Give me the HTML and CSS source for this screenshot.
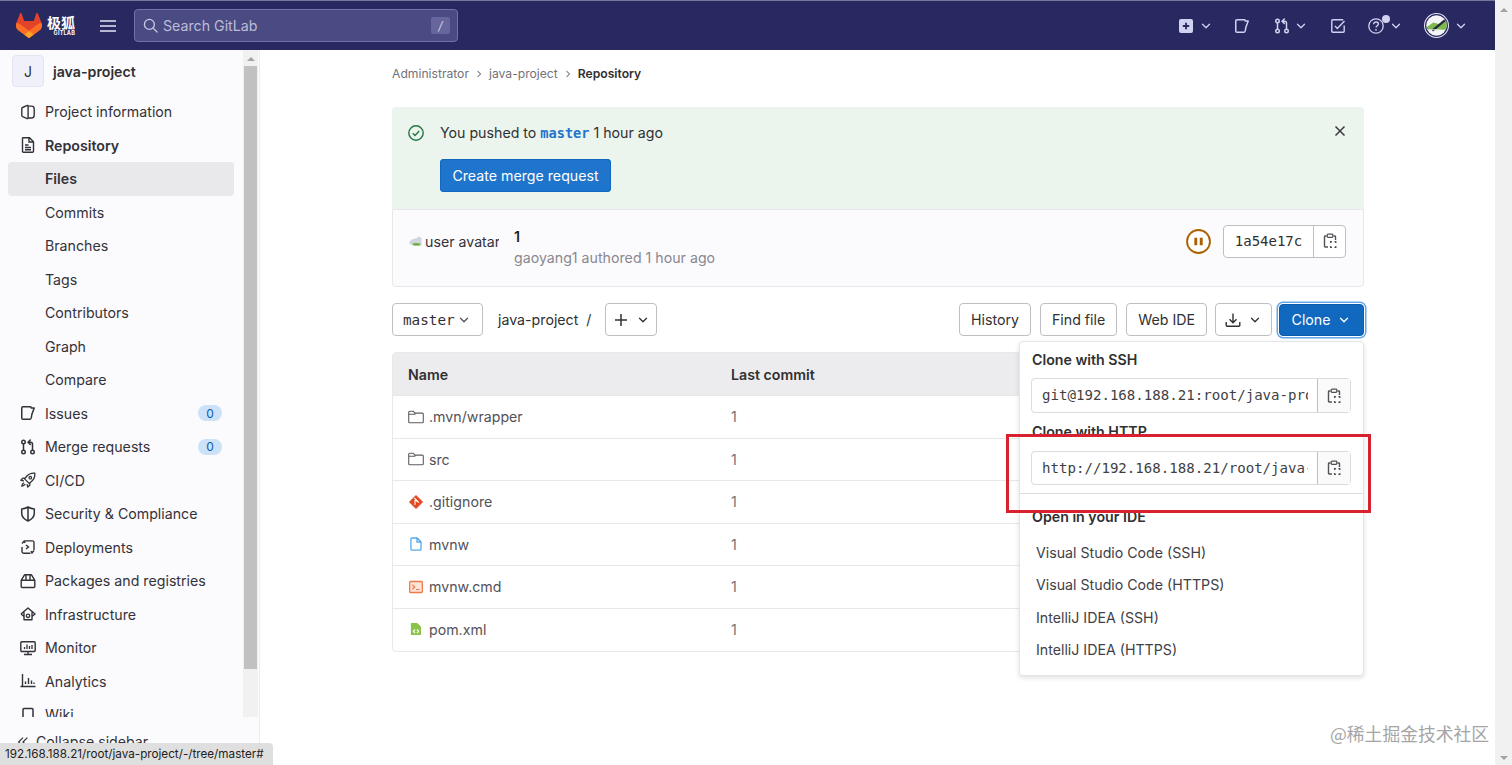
FILE: index.html
```html
<!DOCTYPE html>
<html lang="en">
<head>
<meta charset="utf-8">
<title>java-project</title>
<link rel="stylesheet" href="styles.css">
</head>
<body>
<svg class="sprite" width="0" height="0">
  <symbol id="chev" viewBox="0 0 16 16"><path d="M4 6l4 4 4-4" fill="none" stroke="currentColor" stroke-width="1.5" stroke-linecap="round" stroke-linejoin="round"/></symbol>
  <symbol id="clip" viewBox="0 0 16 16"><path d="M4.5 3H3.2C2.8 3 2.5 3.3 2.5 3.7v9.6c0 .4.3.7.7.7H6M11.5 3h1.3c.4 0 .7.3.7.7V7" fill="none" stroke="currentColor" stroke-width="1.4"/><rect x="5.2" y="1.2" width="5.6" height="3.2" rx=".8" fill="none" stroke="currentColor" stroke-width="1.3"/><path d="M8.6 10V8.7h1.4M12.4 8.7h1.4V10M13.8 13v1.4h-1.4M10 14.4H8.6V13" fill="none" stroke="currentColor" stroke-width="1.3"/></symbol>
  <symbol id="folder" viewBox="0 0 16 16"><path d="M.7 3.2c0-.6.4-1 1-1h3.7l1.5 1.9h7.4c.6 0 1 .4 1 1v7.7c0 .6-.4 1-1 1H1.7c-.6 0-1-.4-1-1V3.2zM.7 5.3h6.2l.6-1.2" fill="none" stroke="currentColor" stroke-width="1.1"/></symbol>
  <symbol id="issues" viewBox="0 0 16 16"><path d="M3 1.75h7.2c.5 0 .9.3 1 .8l.1.4 2.9 0-2.300 6.200-.6 3.600c-.1.700-.6 1.500-1.300 1.500H3c-.7 0-1.250-.55-1.250-1.250V3C1.750 2.300 2.300 1.750 3 1.750z" fill="none" stroke="currentColor" stroke-width="1.5" stroke-linejoin="round"/></symbol>
  <symbol id="mr" viewBox="0 0 16 16"><g fill="none" stroke="currentColor" stroke-width="1.5"><circle cx="3.5" cy="3" r="1.75"/><circle cx="3.5" cy="13" r="1.75"/><circle cx="12.5" cy="13" r="1.75"/><path d="M3.5 5v6M12.5 11V5c0-1-.7-1.800-1.800-1.800H8.500M10.300 1L8 3.200l2.300 2.200" stroke-linecap="round" stroke-linejoin="round"/></g></symbol>
  <clipPath id="av-clip"><circle cx="12" cy="12" r="9.800"/></clipPath>
</svg>

<div class="app">
  <div class="window">
    <header class="navbar">
      <div class="brand">
        <svg class="tanuki" viewBox="0 0 25 24"><path d="M24.507 9.5l-.034-.09L21.082.562a.896.896 0 00-1.694.091l-2.29 7.01H7.825L5.535.653a.898.898 0 00-1.694-.09L.451 9.411.416 9.5a6.297 6.297 0 002.09 7.278l.012.01.03.022 5.16 3.867 2.56 1.935 1.554 1.176a1.051 1.051 0 001.268 0l1.555-1.176 2.56-1.935 5.197-3.89.014-.01A6.297 6.297 0 0024.507 9.5z" fill="#E24329"/><path d="M24.507 9.5l-.034-.09a11.44 11.44 0 00-4.56 2.051l-7.447 5.632 4.742 3.584 5.197-3.89.014-.01A6.297 6.297 0 0024.507 9.5z" fill="#FC6D26"/><path d="M7.707 20.677l2.56 1.935 1.555 1.176a1.051 1.051 0 001.268 0l1.555-1.176 2.56-1.935-4.743-3.584-4.755 3.584z" fill="#FCA326"/><path d="M5.01 11.461a11.43 11.43 0 00-4.56-2.05L.416 9.5a6.297 6.297 0 002.09 7.278l.012.01.03.022 5.16 3.867 4.745-3.584-7.444-5.632z" fill="#FC6D26"/></svg>
        <div class="brand-text"><span class="brand-cn">极狐</span><span class="brand-en">GITLAB</span></div>
      </div>
      <svg class="burger" viewBox="0 0 16 16"><path d="M0 3h16M0 8h16M0 13h16" stroke="currentColor" stroke-width="1.3"/></svg>
      <div class="search">
        <svg class="search-ic" viewBox="0 0 16 16"><circle cx="6.8" cy="6.8" r="5.3" fill="none" stroke="currentColor" stroke-width="1.4"/><path d="M10.8 10.8L15 15" stroke="currentColor" stroke-width="1.4" stroke-linecap="round"/></svg>
        <span class="search-text">Search GitLab</span>
        <kbd class="slash">/</kbd>
      </div>
      <nav class="nav-right">
        <span class="nav-item"><svg class="ic14" viewBox="0 0 14 14"><rect width="14" height="14" rx="2" fill="currentColor"/><path d="M7 3.8v6.4M3.8 7h6.4" stroke="#292961" stroke-width="1.8"/></svg><svg class="chev-12" ><use href="#chev"/></svg></span>
        <span class="nav-item nav-issues"><svg class="ic16"><use href="#issues"/></svg></span>
        <span class="nav-item nav-mr"><svg class="ic16"><use href="#mr"/></svg><svg class="chev-12"><use href="#chev"/></svg></span>
        <span class="nav-item nav-todo"><svg class="ic16" viewBox="0 0 16 16"><path d="M14.2 7.5v5.7c0 .6-.5 1-1 1H2.800c-.6 0-1-.4-1-1V2.800c0-.6.4-1 1-1h10.400" fill="none" stroke="currentColor" stroke-width="1.4"/><path d="M5 8l2.300 2.400L14.500 3" fill="none" stroke="currentColor" stroke-width="1.4"/></svg></span>
        <span class="nav-item nav-help"><svg class="ic16" viewBox="0 0 16 16"><circle cx="8" cy="8" r="7.2" fill="none" stroke="currentColor" stroke-width="1.3"/><path d="M5.700 6.200c0-1.400 1-2.200 2.400-2.200s2.300.9 2.300 2c0 1.800-2.400 1.700-2.400 3.600" fill="none" stroke="currentColor" stroke-width="1.4"/><circle cx="8" cy="11.800" r=".9" fill="currentColor"/></svg><i class="help-dot"></i><svg class="chev-12"><use href="#chev"/></svg></span>
        <span class="nav-item nav-user"><svg class="nav-avatar" viewBox="0 0 24 24"><circle cx="12" cy="12" r="11.500" fill="#292961" stroke="#e6e6f2"/><g clip-path="url(#av-clip)"><rect width="24" height="24" fill="#f4f5f6"/><path d="M2 14l7-5 7 2 6-4v9H2z" fill="#7cbb4a"/><path d="M8 17L20 7" stroke="#26263c" stroke-width="2.200"/><path d="M2 16h14" stroke="#d8dde0" stroke-width="1"/></g></svg><svg class="chev-12"><use href="#chev"/></svg></span>
      </nav>
    </header>

    <div class="layout">
      <aside class="sidebar">
        <div class="side-scroll">
          <div class="side-main">
            <div class="context"><span class="ctx-avatar">J</span><span class="ctx-name">java-project</span></div>
            <ul class="side-list">
              <li class="side-item"><svg class="ic16" viewBox="0 0 16 16"><path d="M7.200 1.400L2.600 3.500c-.5.200-.8.600-.8 1.100v7c0 .5.300.9.800 1.100l4.600 1.900c.4.200.9-.1.900-.6V2c0-.5-.5-.8-.9-.6zM8.100 2.100h3.400c1.500 0 2.700 1.200 2.700 2.700v6.500c0 1.500-1.200 2.700-2.700 2.700H8.100" fill="none" stroke="currentColor" stroke-width="1.4" stroke-linejoin="round"/></svg>Project information</li>
              <li class="side-item is-open"><svg class="ic16" viewBox="0 0 16 16"><path d="M3 .8h6.500L13.500 4.800v9.400c0 .6-.4 1-1 1H3.500c-.6 0-1-.4-1-1V1.300C2.500 1 2.700.8 3 .8zM9 1v4h4.300M5 8h3.500M5 10.500h6M5 12.800h6" fill="none" stroke="currentColor" stroke-width="1.400"/></svg>Repository</li>
              <li class="side-item is-active sub">Files</li>
              <li class="side-item sub">Commits</li>
              <li class="side-item sub">Branches</li>
              <li class="side-item sub">Tags</li>
              <li class="side-item sub">Contributors</li>
              <li class="side-item sub">Graph</li>
              <li class="side-item sub">Compare</li>
              <li class="side-item"><svg class="ic16"><use href="#issues"/></svg>Issues<span class="badge">0</span></li>
              <li class="side-item"><svg class="ic16"><use href="#mr"/></svg>Merge requests<span class="badge">0</span></li>
              <li class="side-item"><svg class="ic16" viewBox="0 0 16 16"><path d="M14.800 1.200c-3.500-.3-6.300.9-8.300 3.300L4.600 6.900l4.500 4.500 2.400-1.900c2.400-2 3.600-4.800 3.300-8.300zM5.200 6.200H2.800L.9 8.300l3 .6M9.800 10.800v2.400l-2.100 1.900-.6-3M4 10.800C2.800 11.500 2 12.700 1.800 14.200c1.500-.2 2.700-1 3.400-2.200" fill="none" stroke="currentColor" stroke-width="1.300" stroke-linejoin="round"/><circle cx="10.300" cy="5.700" r="1.300" fill="none" stroke="currentColor" stroke-width="1.200"/></svg>CI/CD</li>
              <li class="side-item"><svg class="ic16" viewBox="0 0 16 16"><path d="M8 1C5.800 2.300 3.800 2.800 1.700 2.900v4.400c0 3.300 2.400 6.100 6.300 7.700 3.900-1.600 6.300-4.400 6.300-7.700V2.900C12.200 2.800 10.200 2.300 8 1zM8 1.500v13" fill="none" stroke="currentColor" stroke-width="1.500" stroke-linejoin="round"/></svg>Security &amp; Compliance</li>
              <li class="side-item"><svg class="ic16" viewBox="0 0 16 16"><path d="M2 8v4.500c0 1 .7 1.700 1.700 1.700h6.800M5 1.900h7.300c1 0 1.700.7 1.700 1.700V11M2 4.500L4.200 2 5 4M14 11.500L12 14l-1-2" fill="none" stroke="currentColor" stroke-width="1.400"/><path d="M6 6l2.500 2L6 10" fill="none" stroke="currentColor" stroke-width="1.400"/></svg>Deployments</li>
              <li class="side-item"><svg class="ic16" viewBox="0 0 16 16"><path d="M1.200 7.300h13.600v6.200c0 .6-.4 1-1 1H2.200c-.6 0-1-.4-1-1V7.300zM1.200 7.300L4.500 1.800h7L14.800 7.300M6 7V1.800M10 7V1.800" fill="none" stroke="currentColor" stroke-width="1.400" stroke-linejoin="round"/></svg>Packages and registries</li>
              <li class="side-item"><svg class="ic16" viewBox="0 0 16 16"><path d="M1 8l7-6 7 6-2.800 2.300M3.800 10.300L1 8M4 6.300v7.500h8V6.300" fill="none" stroke="currentColor" stroke-width="1.400" stroke-linejoin="round"/><circle cx="8" cy="9.800" r="1.700" fill="none" stroke="currentColor" stroke-width="1.300"/></svg>Infrastructure</li>
              <li class="side-item"><svg class="ic16" viewBox="0 0 16 16"><rect x=".8" y="1.800" width="14.400" height="9.700" rx="1" fill="none" stroke="currentColor" stroke-width="1.400"/><path d="M8 11.500v3M4 14.500h8M4.500 9V7M7 9V4.500M9.500 9V6M12 9V5" stroke="currentColor" stroke-width="1.300" fill="none"/></svg>Monitor</li>
              <li class="side-item"><svg class="ic16" viewBox="0 0 16 16"><path d="M2.500 1v12.500M.5 13.500H15.500M5.500 11V8.500M8.500 11V5M11.500 11V7.500M14 11V9.500" stroke="currentColor" stroke-width="1.400" fill="none"/></svg>Analytics</li>
              <li class="side-item"><svg class="ic16" viewBox="0 0 16 16"><path d="M3 15V2.500c0-.6.400-1 1-1h8c.6 0 1 .4 1 1V15" fill="none" stroke="currentColor" stroke-width="1.500"/></svg>Wiki</li>
            </ul>
          </div>
          <div class="side-track"><i class="arrow-up"></i><div class="side-thumb"></div></div>
        </div>
        <div class="side-foot"><svg class="collapse" viewBox="0 0 16 16"><path d="M8 3L3 8l5 5M13 3L8 8l5 5" fill="none" stroke="currentColor" stroke-width="1.400"/></svg>Collapse sidebar</div>
      </aside>

      <main class="content">
        <div class="container">
          <div class="crumbs"><span>Administrator</span><svg class="crumb-sep" viewBox="0 0 16 16"><path d="M6 4l4 4-4 4" fill="none" stroke="currentColor" stroke-width="1.400"/></svg><span>java-project</span><svg class="crumb-sep" viewBox="0 0 16 16"><path d="M6 4l4 4-4 4" fill="none" stroke="currentColor" stroke-width="1.400"/></svg><b>Repository</b></div>

          <section class="alert">
            <svg class="alert-ic" viewBox="0 0 16 16"><circle cx="8" cy="8" r="7.200" fill="none" stroke="#217645" stroke-width="1.400"/><path d="M4.800 8.200l2.200 2.200 4.200-4.500" fill="none" stroke="#217645" stroke-width="1.400"/></svg>
            <div class="alert-body">
              <p class="alert-text">You pushed to <code class="ref">master</code> 1 hour ago</p>
              <a class="btn-primary">Create merge request</a>
            </div>
            <svg class="alert-close" viewBox="0 0 16 16"><path d="M3.500 3.500l9 9M12.500 3.500l-9 9" stroke="#3a3a40" stroke-width="1.500"/></svg>
          </section>

          <section class="commit">
            <div class="broken"><svg class="broken-ic" viewBox="0 0 16 16"><path d="M0 10c1-3 4-4.500 7-4.500L10 3.500l2.500 1.500v7.500c-4 1-10 .5-12.500-2.500z" fill="#cfd6dd"/><path d="M3 11c3-1.500 6-1.500 9 0l-2 1.500H5z" fill="#6fae3f"/></svg><span>user avatar</span></div>
            <div class="commit-info"><div class="commit-title">1</div><div class="commit-meta">gaoyang1 authored 1 hour ago</div></div>
            <svg class="pipeline" viewBox="0 0 24 24"><circle cx="12" cy="12" r="11" fill="#fff" stroke="#ab6100" stroke-width="1.800"/><path d="M9.400 8.500v7M14.600 8.500v7" stroke="#ab6100" stroke-width="2.800"/></svg>
            <div class="hash"><span class="hash-text">1a54e17c</span><span class="hash-copy"><svg class="ic16"><use href="#clip"/></svg></span></div>
          </section>

          <div class="toolbar">
            <span class="btn mono">master<svg class="chev-12"><use href="#chev"/></svg></span>
            <span class="path">java-project</span><span class="path-sep">/</span>
            <span class="btn btn-plus"><svg class="ic16" viewBox="0 0 16 16"><path d="M8 2v12M2 8h12" stroke="currentColor" stroke-width="1.500"/></svg><svg class="chev-12"><use href="#chev"/></svg></span>
            <span class="spacer"></span>
            <span class="btn btn-wide-gap">History</span>
            <span class="btn btn-wide-gap">Find file</span>
            <span class="btn">Web IDE</span>
            <span class="btn btn-dl"><svg class="ic16" viewBox="0 0 16 16"><path d="M8 1.500v9M4.500 7.300L8 10.800l3.500-3.500M1.200 10v3.300c0 .6.400 1 1 1h11.600c.6 0 1-.4 1-1V10" fill="none" stroke="currentColor" stroke-width="1.400"/></svg><svg class="chev-12"><use href="#chev"/></svg></span>
            <span class="btn btn-clone">Clone<svg class="chev-12"><use href="#chev"/></svg></span>
          </div>

          <section class="table">
            <div class="row head"><span class="col-name">Name</span><span class="col-commit">Last commit</span></div>
            <div class="row"><span class="col-name"><svg class="file-ic grey"><use href="#folder"/></svg>.mvn/wrapper</span><span class="col-commit">1</span></div>
            <div class="row"><span class="col-name"><svg class="file-ic grey"><use href="#folder"/></svg>src</span><span class="col-commit">1</span></div>
            <div class="row"><span class="col-name"><svg class="file-ic" viewBox="0 0 16 16"><path d="M8 1.500l6.500 6.500L8 14.500 1.500 8z" fill="#e2471e" stroke="#e2471e" stroke-linejoin="round"/><path d="M6.300 4l3.500 3.500M7 6v5M7 6l4 2.500" stroke="#fff" stroke-width="1.100" fill="none"/></svg>.gitignore</span><span class="col-commit">1</span></div>
            <div class="row"><span class="col-name"><svg class="file-ic" viewBox="0 0 16 16"><path d="M3.800 2h5.400L13 5.800v7.400c0 .5-.4.900-.9.900H3.800c-.5 0-.9-.4-.9-.9V2.900c0-.5.400-.9.900-.9zM9 2v4h4" fill="none" stroke="#55a9ea" stroke-width="1.300"/></svg>mvnw</span><span class="col-commit">1</span></div>
            <div class="row"><span class="col-name"><svg class="file-ic" viewBox="0 0 16 16"><rect x="1.700" y="2.500" width="12.600" height="11" rx=".8" fill="#fbe4d8" stroke="#f0794a" stroke-width="1.300"/><path d="M4.300 5.700l2.500 2.200-2.500 2.300M8 10.500h3.500" stroke="#f0794a" stroke-width="1.200" fill="none"/></svg>mvnw.cmd</span><span class="col-commit">1</span></div>
            <div class="row"><span class="col-name"><svg class="file-ic" viewBox="0 0 16 16"><path d="M3.500 2h5.700L13 5.800v7.600c0 .4-.3.600-.6.600H3.500c-.4 0-.6-.2-.6-.6V2.600c0-.4.200-.6.600-.6z" fill="#8bc34a"/><path d="M7 8.500L5.300 10.200 7 12M9 8.500l1.700 1.700L9 12" stroke="#fff" stroke-width="1.100" fill="none"/></svg>pom.xml</span><span class="col-commit">1</span></div>
          </section>
        </div>
      </main>
    </div>
  </div>

  <div class="page-track"><i class="arrow-up"></i><i class="arrow-down"></i></div>
</div>

<div class="clone-menu">
  <h4 class="menu-title">Clone with SSH</h4>
  <div class="copy-field"><span class="copy-text">git@192.168.188.21:root/java-project.git</span><span class="copy-btn"><svg class="ic16"><use href="#clip"/></svg></span></div>
  <h4 class="menu-title second">Clone with HTTP</h4>
  <div class="copy-field field-two"><span class="copy-text">http://192.168.188.21/root/java-project.git</span><span class="copy-btn"><svg class="ic16"><use href="#clip"/></svg></span></div>
  <hr class="menu-rule">
  <h4 class="menu-title third">Open in your IDE</h4>
  <ul class="menu-list">
    <li>Visual Studio Code (SSH)</li>
    <li>Visual Studio Code (HTTPS)</li>
    <li>IntelliJ IDEA (SSH)</li>
    <li>IntelliJ IDEA (HTTPS)</li>
  </ul>
</div>
<div class="red-box"></div>
<div class="status">192.168.188.21/root/java-project/-/tree/master#</div>
<div class="watermark">@稀土掘金技术社区</div>
</body>
</html>
```

FILE: styles.css
```css
* { box-sizing: border-box; }
html, body { margin: 0; height: 100%; overflow: hidden; }
body { font-family: Inter, "Noto Sans", sans-serif; font-size: 14.2px; color: #303030; background: #fff; position: relative; }
.sprite { position: absolute; }
svg { display: block; flex: none; }
.ic16 { width: 16px; height: 16px; }
.ic14 { width: 14px; height: 14px; }
.chev-12 { width: 14px; height: 14px; }

.app { display: flex; height: 765px; }
.window { flex: 1; min-width: 0; display: flex; flex-direction: column; }
.page-track { width: 17px; background: #f1f1f1; display: flex; flex-direction: column; justify-content: space-between; align-items: center; padding: 8px 0 5px; }
.arrow-up { display: block; width: 0; height: 0; border: 4px solid transparent; border-top: 0; border-bottom: 4px solid #a3a3a3; }
.arrow-down { display: block; width: 0; height: 0; border: 4px solid transparent; border-bottom: 0; border-top: 4px solid #a3a3a3; }

.navbar { height: 50px; flex: none; display: flex; align-items: center; background: #292961; border-top: 1px solid #77779c; color: #d1d1f0; padding-left: 16px; }
.brand { display: flex; align-items: center; width: 84px; gap: 5px; }
.tanuki { width: 26px; height: 25px; }
.brand-text { display: flex; flex-direction: column; align-items: flex-end; color: #fff; }
.brand-cn { font-family: "Noto Sans CJK SC", sans-serif; font-weight: 700; font-size: 14px; line-height: 15px; }
.brand-en { font-size: 5.500px; font-weight: 700; line-height: 7px; letter-spacing: .2px; }
.burger { width: 16px; height: 16px; color: #e6e6f5; }
.search { margin-left: 18px; width: 324px; height: 33px; display: flex; align-items: center; gap: 5px; background: #4b4b84; border: 1px solid #7272ac; border-radius: 4px; padding: 0 7px 0 8px; color: #c9c9e4; }
.search-ic { width: 15px; height: 15px; }
.search-text { flex: 1; font-size: 14.200px; color: #bcbcd8; }
.slash { width: 19px; height: 17px; background: #66669c; border-radius: 2px; font-family: Inter, sans-serif; font-size: 12px; display: flex; align-items: center; justify-content: center; color: #d4d4ec; font-style: italic; }
.nav-right { margin-left: auto; display: flex; align-items: center; padding-right: 27px; }
.nav-item { display: flex; align-items: center; position: relative; gap: 6px; }
.nav-issues { margin-left: 21px; }
.nav-mr { margin-left: 24px; gap: 4px; }
.nav-todo { margin-left: 22px; }
.nav-help { margin-left: 22px; gap: 5px; }
.nav-user { margin-left: 21px; gap: 5px; }
.help-dot { position: absolute; left: 13.500px; top: -3px; width: 8px; height: 8px; border-radius: 50%; background: #d1d1f0; }
.nav-avatar { width: 25px; height: 25px; }

.layout { flex: 1; min-height: 0; display: flex; }
.sidebar { width: 260px; flex: none; display: flex; flex-direction: column; background: #fbfafd; border-right: 1px solid #ededf0; }
.side-scroll { height: 667px; flex: none; display: flex; overflow: hidden; }
.side-main { width: 243px; flex: none; padding: 5px 9px 0 8px; }
.side-track { width: 15px; background: #f1f1f1; display: flex; flex-direction: column; align-items: center; padding-top: 7px; }
.side-thumb { width: 13px; height: 603px; margin-top: 5px; background: #c1c1c1; }
.context { display: flex; align-items: center; height: 40px; padding: 0 0 8px 4px; gap: 9px; }
.ctx-avatar { width: 32px; height: 32px; background: #f0f0fa; border: 1px solid #e4e4f0; border-radius: 4px; display: flex; align-items: center; justify-content: center; font-size: 14px; color: #303030; }
.ctx-name { font-weight: 600; font-size: 14.200px; }
.side-list { list-style: none; margin: 0; padding: 0; }
.side-item { height: 33.500px; display: flex; align-items: center; gap: 9px; padding: 0 12px; border-radius: 4px; color: #333238; white-space: nowrap; }
.side-item.sub { padding-left: 37px; }
.is-open { font-weight: 600; }
.is-active { font-weight: 600; background: #e9e9eb; }
.badge { margin-left: auto; width: 24px; height: 16px; border-radius: 8px; background: #cbe2f9; color: #0b5cad; font-size: 12px; font-weight: 400; display: flex; align-items: center; justify-content: center; }
.side-foot { flex: 1; display: flex; align-items: center; gap: 6px; padding: 0 0 0 16px; color: #333238; white-space: nowrap; margin-top: 1px; }
.collapse { width: 14px; height: 14px; }

.content { flex: 1; min-width: 0; overflow: hidden; padding-left: 132px; }
.container { width: 972px; }
.crumbs { height: 57px; display: flex; align-items: center; gap: 4px; font-size: 12.150px; color: #737278; padding-bottom: 10px; }
.crumbs b { color: #303030; font-weight: 600; }
.crumb-sep { width: 12px; height: 12px; }

.alert { height: 102px; background: #ecf4ee; display: flex; padding: 17px 16px 0 16px; border-radius: 4px 4px 0 0; }
.alert-ic { width: 16px; height: 16px; margin-top: 1px; }
.alert-body { flex: 1; padding-left: 16px; }
.alert-text { margin: 0 0 17px; line-height: 18px; }
.ref { font-family: "DejaVu Sans Mono", monospace; font-size: 13.600px; font-weight: 700; color: #1f75cb; }
.btn-primary { display: inline-flex; align-items: center; justify-content: center; width: 171px; height: 33px; background: #1f75cb; color: #fff; border-radius: 4px; box-shadow: inset 0 0 0 1px #1068bf; }
.alert-close { width: 16px; height: 16px; margin: -1px 0 0 0; }

.commit { height: 78px; display: flex; align-items: center; background: #fbfafd; border: 1px solid #e8e8ea; border-radius: 0 0 4px 4px; padding: 0 17px 14px 16px; }
.broken { width: 90px; display: flex; align-items: center; overflow: hidden; white-space: nowrap; height: 32px; color: #333238; flex: none; }
.broken-ic { width: 16px; height: 16px; }
.commit-info { flex: 1; padding-left: 15px; margin-top: 12px; }
.commit-title { font-weight: 600; line-height: 20px; color: #1f1e24; }
.commit-meta { color: #89888d; line-height: 20px; margin-top: 1px; }
.pipeline { width: 25px; height: 25px; margin-right: 12px; }
.hash { display: flex; height: 33px; border: 1px solid #bfbfc3; border-radius: 4px; background: #fff; align-items: stretch; margin-right: 0; }
.hash-text { width: 90px; display: flex; align-items: center; justify-content: center; font-family: "DejaVu Sans Mono", monospace; font-size: 14px; border-right: 1px solid #bfbfc3; color: #303030; }
.hash-copy { width: 31px; display: flex; align-items: center; justify-content: center; color: #535158; }

.toolbar { margin-top: 16px; height: 33px; display: flex; align-items: center; gap: 8px; }
.btn { height: 33px; display: inline-flex; align-items: center; justify-content: center; padding: 0 11px; background: #fff; border: 1px solid #bfbfc3; border-radius: 4px; color: #303030; gap: 7px; white-space: nowrap; }
.btn-wide-gap { margin-right: 1px; }
.mono { font-family: "DejaVu Sans Mono", monospace; font-size: 14.300px; width: 91px; justify-content: flex-start; padding: 0 0 0 10px; gap: 2px; }
.mono svg { color: #535158; }
.path { margin-left: 7px; }
.path-sep { margin-left: 0; }
.btn-plus { width: 52px; padding: 0; margin-left: 6px; }
.spacer { flex: 1; }
.btn-dl { width: 57px; padding: 0; }
.btn-clone { width: 85px; background: #1068bf; border-color: #0b5cad; color: #fff; box-shadow: 0 0 0 1px #fff, 0 0 0 2.500px #63a6e9; margin-left: -1px; padding: 0; height: 32px; }

.table { margin-top: 16px; height: 300px; border: 1px solid #e8e8ea; border-radius: 4px; overflow: hidden; }
.row { height: 42.500px; display: flex; align-items: center; border-top: 1px solid #e8e8ea; padding-left: 15px; color: #535158; }
.row.head { height: 42px; border-top: 0; background: #ececef; font-weight: 600; color: #303030; }
.col-name { width: 323px; display: flex; align-items: center; gap: 5px; }
.file-ic { width: 16px; height: 16px; }
.grey { color: #5e5e5e; }
.col-commit { color: #737278; }
.head .col-commit { color: #303030; }

.clone-menu { position: absolute; left: 1019px; top: 341px; width: 345px; height: 335px; background: #fff; border: 1px solid #e5e5e8; border-radius: 4px; box-shadow: 0 2px 5px rgba(0, 0, 0, .12); padding: 9px 12px 0; }
.menu-title { margin: 0; font-size: 14.200px; font-weight: 600; line-height: 18px; color: #303030; }
.menu-title.second { margin-top: 10px; }
.menu-title.third { margin-top: 14px; }
.copy-field { margin: 9px 0 0 -1px; width: 320px; height: 35px; display: flex; border: 1px solid #dcdcde; border-radius: 4px; }
.field-two { margin-top: 10px; height: 34px; }
.copy-text { flex: 1; min-width: 0; overflow: hidden; white-space: nowrap; font-family: "DejaVu Sans Mono", monospace; font-size: 14.100px; line-height: 33px; margin: 0 9px 0 10px; color: #3f3f44; }
.copy-btn { width: 33px; flex: none; border-left: 1px solid #bfbfc3; background: #fafafa; display: flex; align-items: center; justify-content: center; color: #535158; }
.menu-rule { border: 0; border-top: 1px solid #dcdcde; margin: 8px -12px 0; }
.menu-list { list-style: none; margin: 10px 0 0; padding: 0 0 0 4px; color: #414046; }
.menu-list li { height: 32.500px; display: flex; align-items: center; }

.red-box { position: absolute; left: 1006px; top: 434px; width: 365px; height: 79px; border: 3px solid #d9202e; }
.status { position: absolute; left: 0; bottom: 0; width: 273px; height: 22px; padding-left: 5px; background: #dfdfdf; border-top-right-radius: 4px; font-size: 11.700px; line-height: 22px; color: #222; white-space: nowrap; }
.watermark { position: absolute; left: 1330px; top: 720px; font-family: "Noto Sans CJK SC", sans-serif; font-size: 17.800px; line-height: 26px; color: #a5a5a5; white-space: nowrap; }
```
